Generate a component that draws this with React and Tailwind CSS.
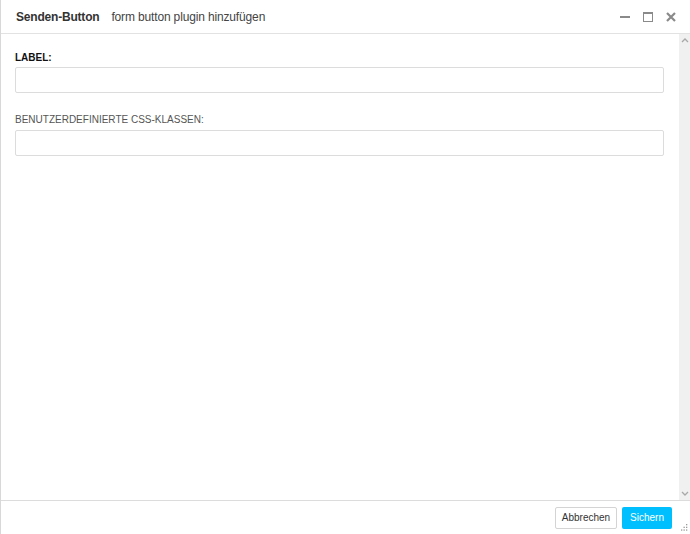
import React from 'react';

const ScrollArrow = ({ up }) => (
  <svg width="8" height="5" viewBox="0 0 8 5" className="text-[#a8a8a8]">
    <path d={up ? 'M1 4 L4 1 L7 4' : 'M1 1 L4 4 L7 1'} fill="none" stroke="currentColor" strokeWidth="1.3" />
  </svg>
);

export default function App() {
  return (
    <div className="w-[690px] h-[534px] bg-white flex flex-col overflow-hidden font-['Liberation_Sans',Arial,sans-serif] text-[#333] border-l border-[#d8d8d8]">
      {/* Header */}
      <div className="h-[34px] shrink-0 flex items-center pl-[15px] pr-[14px] border-b border-[#e2e2e2]">
        <span className="text-[12px] font-bold text-[#333] tracking-[-0.2px]">Senden-Button</span>
        <span className="text-[12px] text-[#444] ml-[12px] tracking-[-0.15px]">form button plugin hinzufügen</span>
        <div className="ml-auto flex items-center gap-[13px] text-[#8a8a8a]">
          <svg width="10" height="10" viewBox="0 0 10 10">
            <rect x="0" y="4" width="10" height="2" fill="currentColor" />
          </svg>
          <svg width="10" height="10" viewBox="0 0 10 10">
            <rect x="0.5" y="0.5" width="9" height="9" fill="none" stroke="currentColor" strokeWidth="1" />
            <rect x="0" y="0" width="10" height="2" fill="currentColor" />
          </svg>
          <svg width="10" height="10" viewBox="0 0 10 10">
            <path d="M1 1 L9 9 M9 1 L1 9" stroke="currentColor" strokeWidth="2.2" />
          </svg>
        </div>
      </div>

      {/* Body */}
      <div className="flex-1 flex min-h-0">
        <div className="flex-1 pl-[14px] pr-[15px] pt-[17px]">
          <div className="text-[10px] font-bold text-[#111] leading-[13px]">LABEL:</div>
          <div className="mt-[3px] h-[26px] border border-[#dcdcdc] rounded-[2px]"></div>
          <div className="mt-[20px] text-[10px] text-[#555] leading-[13px]">BENUTZERDEFINIERTE CSS-KLASSEN:</div>
          <div className="mt-[4px] h-[26px] border border-[#dcdcdc] rounded-[2px]"></div>
        </div>
        <div className="w-[11px] bg-[#f0f0f0] flex flex-col items-center justify-between py-[4px]">
          <ScrollArrow up />
          <ScrollArrow />
        </div>
      </div>

      {/* Footer */}
      <div className="h-[34px] shrink-0 border-t border-[#dcdcdc] flex items-center justify-end pr-[18px] gap-[5px] relative">
        <button className="h-[22px] w-[62px] text-[10px] text-[#333] bg-white border border-[#d4d4d4] rounded-[2px]">Abbrechen</button>
        <button className="h-[22px] w-[50px] text-[10px] text-white bg-[#00bfff] rounded-[2px]">Sichern</button>
        <svg width="7" height="7" viewBox="0 0 7 7" className="absolute right-[2px] bottom-[3px] text-[#9a9a9a]">
          <rect x="5" y="0" width="1.3" height="1.3" fill="currentColor" />
          <rect x="2.5" y="2.7" width="1.3" height="1.3" fill="currentColor" />
          <rect x="5" y="2.7" width="1.3" height="1.3" fill="currentColor" />
          <rect x="0" y="5.4" width="1.3" height="1.3" fill="currentColor" />
          <rect x="2.5" y="5.4" width="1.3" height="1.3" fill="currentColor" />
          <rect x="5" y="5.4" width="1.3" height="1.3" fill="currentColor" />
        </svg>
      </div>
    </div>
  );
}
